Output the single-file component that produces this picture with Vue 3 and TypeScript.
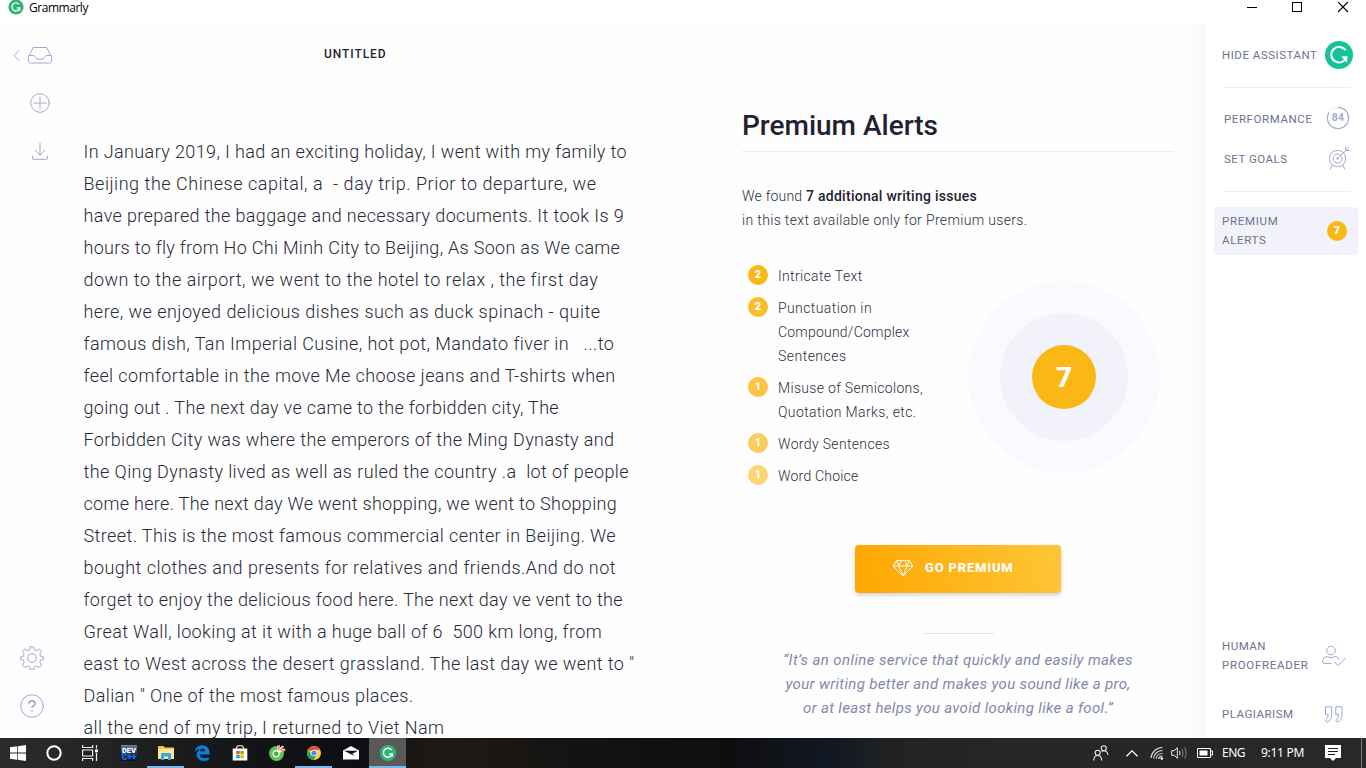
<script setup lang="ts">
import type { Directive } from 'vue'

type Line = [text: string, width: number]

// Tracks a line of text out (or in) until it spans the given width.
const vSpan: Directive<HTMLElement, number> = {
  mounted(el, binding) {
    el.style.letterSpacing = '0px'
    const natural = el.getBoundingClientRect().width
    const count = (el.textContent ?? '').length
    el.style.letterSpacing = `${(binding.value - natural) / count}px`
  },
}

const essay: Line[] = [
  ['In January 2019, I had an exciting holiday, I went with my family to', 543.5],
  ['Beijing the Chinese capital, a  - day trip. Prior to departure, we', 513],
  ['have prepared the baggage and necessary documents. It took Is 9', 540.5],
  ['hours to fly from Ho Chi Minh City to Beijing, As Soon as We came', 536.5],
  ['down to the airport, we went to the hotel to relax , the first day', 514.5],
  ['here, we enjoyed delicious dishes such as duck spinach - quite', 517],
  ['famous dish, Tan Imperial Cusine, hot pot, Mandato fiver in   ...to', 530.5],
  ['feel comfortable in the move Me choose jeans and T-shirts when', 532],
  ['going out . The next day ve came to the forbidden city, The', 475.5],
  ['Forbidden City was where the emperors of the Ming Dynasty and', 531],
  ['the Qing Dynasty lived as well as ruled the country .a  lot of people', 545.5],
  ['come here. The next day We went shopping, we went to Shopping', 533.5],
  ['Street. This is the most famous commercial center in Beijing. We', 532.5],
  ['bought clothes and presents for relatives and friends.And do not', 532.5],
  ['forget to enjoy the delicious food here. The next day ve vent to the', 539.5],
  ['Great Wall, looking at it with a huge ball of 6  500 km long, from', 518.5],
  ['east to West across the desert grassland. The last day we went to "', 551],
  ['Dalian " One of the most famous places.', 330],
  ['all the end of my trip, I returned to Viet Nam', 361],
]

interface Issue { count: number; color: string; lines: Line[] }
const issues: Issue[] = [
  { count: 2, color: '#fbb713', lines: [['Intricate Text', 84.5]] },
  { count: 2, color: '#fbbd2a', lines: [['Punctuation in', 94], ['Compound/Complex', 131.5], ['Sentences', 68.5]] },
  { count: 1, color: '#fcc442', lines: [['Misuse of Semicolons,', 145], ['Quotation Marks, etc.', 138.5]] },
  { count: 1, color: '#fccd5c', lines: [['Wordy Sentences', 112]] },
  { count: 1, color: '#fdd575', lines: [['Word Choice', 80.5]] },
]

const quote: Line[] = [
  ['“It’s an online service that quickly and easily makes', 350],
  ['your writing better and makes you sound like a pro,', 345],
  ['or at least helps you avoid looking like a fool.”', 310],
]
</script>

<template>
  <div class="window">
    <header class="titlebar">
      <svg class="app-logo" viewBox="0 0 16 16" width="16" height="16">
        <circle cx="8" cy="7" r="7.600" fill="#2fb573" />
        <path d="M11 4.400A4 4 0 1 0 11.800 8H8.800M11.800 8v2.800" fill="none" stroke="#e9fff4" stroke-width="1.300" />
      </svg>
      <span v-span="59" class="app-name">Grammarly</span>
      <svg class="controls" width="120" height="16" viewBox="0 0 120 16" fill="none" stroke="#000" shape-rendering="crispEdges">
        <path d="M1 7.500h10" />
        <rect x="46.500" y="2.500" width="9" height="9" />
        <path d="M92 2l10 10M102 2L92 12" shape-rendering="auto" stroke-width="1.100" />
      </svg>
    </header>

    <main class="content">
      <nav class="rail">
        <svg class="r-inbox" width="42" height="20" viewBox="0 0 42 20">
          <path d="M7 5.500L2 10.500l5 5" />
          <path d="M21.500 2.500h13l4.200 7.800q.8.4.8 1.500v4.200q0 2-2 2h-19q-2 0-2-2v-4.200q0-1.100.8-1.500zM16.800 10.500h4.400q1 0 1.600 1.100 1.800 2.900 5.200 2.900t5.200-2.900q.6-1.100 1.600-1.100h4.400" />
        </svg>
        <svg class="r-add" width="20" height="20" viewBox="0 0 20 20">
          <circle cx="10" cy="10" r="9.300" /><path d="M10 4v12M4 10h12" />
        </svg>
        <svg class="r-down" width="18" height="20" viewBox="0 0 18 20">
          <path d="M9 1v12M4.300 8.500L9 13l4.700-4.500M1.500 14v2.500q0 .8.800.8h13.400q.8 0 .8-.8V14" />
        </svg>
        <span class="grow"></span>
        <svg class="r-gear" width="24" height="24" viewBox="0 0 24 24">
          <circle cx="12" cy="12" r="4.400" />
          <path d="M10.300.7h3.400l.6 3.100 2.300 1 2.700-1.800 2.300 2.300-1.800 2.700 1 2.400 2.600.5v2.700l-2.600.5-1 2.500 1.800 2.600-2.400 2.400-2.700-1.800-2.300 1-.5 3h-3.400l-.6-3-2.300-1-2.700 1.800-2.300-2.400 1.800-2.600-1-2.500-2.600-.5v-2.700l2.600-.5 1-2.400-1.800-2.700 2.400-2.300 2.600 1.800 2.300-1z" />
        </svg>
        <svg class="r-help" width="24" height="24" viewBox="0 0 24 24">
          <circle cx="12" cy="12" r="11.300" />
          <path d="M9 9.700q.1-2.900 3-2.900t3 2.600q0 1.500-1.500 2.300-1.500.9-1.500 2.400M12 16.300v1.200" stroke-width="1.700" stroke-linecap="butt" />
        </svg>
      </nav>

      <section class="editor">
        <h1 class="doc-title"><span v-span="62.500">UNTITLED</span></h1>
        <div class="essay">
          <div v-for="[text, width] in essay" :key="text"><span v-span="width">{{ text }}</span></div>
        </div>
      </section>

      <section class="alerts">
        <h2><span v-span="196">Premium Alerts</span></h2>
        <p class="intro">
          <span v-span="64">We found </span><b v-span="171">7 additional writing issues</b><br />
          <span v-span="285.500">in this text available only for Premium users.</span>
        </p>
        <div class="breakdown">
          <ul>
            <li v-for="issue in issues" :key="issue.lines[0][0]">
              <i class="count" :style="{ background: issue.color }">{{ issue.count }}</i>
              <div>
                <div v-for="[text, width] in issue.lines" :key="text"><span v-span="width">{{ text }}</span></div>
              </div>
            </li>
          </ul>
          <div class="ring outer"><div class="ring middle"><div class="ring inner">7</div></div></div>
        </div>
        <button class="premium">
          <svg width="22" height="18" viewBox="0 0 22 18" fill="none" stroke="#fff" stroke-linejoin="round">
            <path d="M4.800 1.500h12.400L21 7 11 17 1 7zM1 7h20M4.800 1.500l2 5.500L11 17l4.200-10 2-5.500M6.800 7L9 1.500M15.200 7L13 1.500" />
          </svg>
          <span v-span="88.500">GO PREMIUM</span>
        </button>
        <hr />
        <blockquote>
          <div v-for="[text, width] in quote" :key="text"><span v-span="width">{{ text }}</span></div>
        </blockquote>
      </section>

      <aside class="assistant">
        <div class="row hide">
          <span v-span="95.500">HIDE ASSISTANT</span>
          <svg width="28" height="28" viewBox="0 0 28 28">
            <circle cx="14" cy="14" r="14" fill="#15c39a" />
            <path d="M20.600 9.300a7.800 7.800 0 1 0 .8 7.200h-3.800" fill="none" stroke="#fff" stroke-width="2" />
            <path d="M16.300 15.500h5.900v6.300z" fill="#fff" />
          </svg>
        </div>
        <div class="rule"></div>
        <div class="row performance">
          <span v-span="88.500">PERFORMANCE</span>
          <svg width="24" height="24" viewBox="0 0 24 24" fill="none">
            <circle cx="12" cy="12" r="10.600" stroke="#e4e6f2" />
            <path d="M12 1.400A10.600 10.600 0 1 1 3 6.400" stroke="#a6add0" stroke-width="1.200" />
            <text x="12" y="15.200" text-anchor="middle" font-size="10.500" font-weight="700" fill="#a3aacd" letter-spacing=".3">84</text>
          </svg>
        </div>
        <div class="row goals">
          <span v-span="63.500">SET GOALS</span>
          <svg width="22" height="24" viewBox="0 0 22 24" fill="none" stroke="#a0a8ce">
            <circle cx="9.500" cy="12.500" r="8.200" /><circle cx="9.500" cy="12.500" r="4.500" />
            <path d="M9.500 12.500L21 1.500M17.700 4.500V.8M17.700 4.500h3.800M4.200 19l-2 4.500M14.800 19l2 4.500" />
            <circle cx="9.500" cy="12.500" r=".8" />
          </svg>
        </div>
        <div class="rule second"></div>
        <div class="selected">
          <div><span v-span="56.500">PREMIUM</span><br /><span v-span="44.500">ALERTS</span></div>
          <i class="count">7</i>
        </div>
        <span class="grow"></span>
        <div class="row human">
          <div><span v-span="44">HUMAN</span><br /><span v-span="86.500">PROOFREADER</span></div>
          <svg width="24" height="22" viewBox="0 0 24 22" fill="none" stroke="#a0a8ce">
            <circle cx="9" cy="5.500" r="4.300" />
            <path d="M4.500 11.500q4.500 2.600 9 0 2.300.6 3.300 3.200M4.500 11.500Q.8 12.500.6 16v1.200q0 1.200 1.400 1.200h7.500M12 16.500l4 4L23.500 13" />
          </svg>
        </div>
        <div class="row plagiarism">
          <span v-span="71.500">PLAGIARISM</span>
          <svg width="20" height="17" viewBox="0 0 20 17" fill="none" stroke="#a0a8ce">
            <path d="M1.500.8h6.200v8.200q0 5.200-4.500 7.200L1.400 14q2.900-1.600 2.900-5.400H1.500zM11.800.8H18v8.200q0 5.200-4.500 7.200L11.700 14q2.900-1.600 2.900-5.400h-2.800z" />
          </svg>
        </div>
      </aside>
    </main>

    <footer class="taskbar">
      <div class="task system"><svg width="16" height="16" viewBox="0 0 16 16" fill="#fff"><path d="M0 2.300l7-1v6.300H0zM7.700 1.200L16 0v7.600H7.700zM0 8.400h7v6.300l-7-1zM7.700 8.400H16V16l-8.300-1.200z" /></svg></div>
      <div class="task system"><svg width="16" height="16" viewBox="0 0 16 16"><circle cx="8" cy="8" r="6.700" fill="none" stroke="#fff" stroke-width="2" /></svg></div>
      <div class="task system">
        <svg width="16" height="16" viewBox="0 0 16 16" fill="none" stroke="#eee" stroke-width="1.200"><path d="M.6 0v2.500h10V0M.6 16v-2.500h10V16M.6 5h10v6H.6zM14.500 0v3.500M14.500 8v8" /><path d="M13 4.500h3v2.800h-3z" fill="#fff" stroke="none" /></svg>
      </div>
      <div class="task dev">
        <svg width="16" height="16" viewBox="0 0 16 16">
          <defs><linearGradient id="devbg" x2="0" y2="1"><stop stop-color="#6c7ea5" /><stop offset=".45" stop-color="#273b6b" /><stop offset="1" stop-color="#07112c" /></linearGradient></defs>
          <rect width="16" height="16" fill="url(#devbg)" />
          <text x="8" y="7.500" text-anchor="middle" font-size="7.500" font-weight="900" fill="#fff">DEV</text>
          <text x="8" y="15" text-anchor="middle" font-size="8.500" font-weight="900" fill="#1377e8">C++</text>
        </svg>
      </div>
      <div class="task open">
        <svg width="18" height="16" viewBox="0 0 18 16"><path d="M1 1.500Q1 1 1.500 1h5l1.500 1.500h8.500q.5 0 .5.500v11H1z" fill="#f4c542" /><path d="M1 4h16v10H1z" fill="#ffe694" /><path d="M4 15V9.300Q4 8 5.300 8h7.400Q14 8 14 9.300V15h-3v-3.500H7V15z" fill="#36a9e1" /></svg>
      </div>
      <div class="task edge">
        <svg width="16" height="16" viewBox="0 0 16 16"><path d="M.5 7.300C1.200 2.500 4.300.3 8.200.3c4.800 0 7.300 3.500 7.300 7.300v1.800H5.700c.2 2.600 2.300 3.700 4.700 3.700 1.700 0 3.200-.5 4.300-1.200v3c-1.400.7-3 1-4.800 1-4.300 0-7.200-2.300-7.200-6.300 0-2.400 1.200-4.300 3.200-5.400C3.200 4.500 1.500 5.600.5 7.300zm5.300-1H11c0-1.800-.9-2.700-2.500-2.700-1.400 0-2.400.9-2.700 2.700z" fill="#0b7edb" /></svg>
      </div>
      <div class="task">
        <svg width="16" height="16" viewBox="0 0 16 16"><path d="M4.500 4V2.500Q5 .7 8 .7t3.500 1.800V4" fill="none" stroke="#ddd" stroke-width="1.200" /><path d="M.7 3.500h14.600v12H.7z" fill="#fff" /><path d="M4.300 6h3.400v3.300H4.300z" fill="#f25022" /><path d="M8.400 6h3.400v3.300H8.400z" fill="#7fba00" /><path d="M4.300 10h3.400v3.300H4.300z" fill="#00a4ef" /><path d="M8.400 10h3.400v3.300H8.400z" fill="#ffb900" /></svg>
      </div>
      <div class="task">
        <svg width="18" height="16" viewBox="0 0 18 16"><circle cx="8.500" cy="8.500" r="7.500" fill="#64c355" /><circle cx="8.200" cy="8.800" r="3" fill="#4ba944" stroke="#e5f7df" stroke-width="1.400" /><path d="M9 6.500L9.700.3l2.300.3-.3 3L14 .6l2 1.400-2.200 2.700 3.200-1.200.4 2.300-6 2z" fill="#fff" /><path d="M10.700 5.500l.2-4.500M12.500 5.800L14.900 2M13.300 6.500l3.500-1.500" stroke="#ec6731" stroke-width="1.200" /></svg>
      </div>
      <div class="task open">
        <svg width="14" height="14" viewBox="0 0 14 14"><circle cx="7" cy="7" r="7" fill="#ffcd40" /><path d="M7 7L1 3.500A7 7 0 0 1 13.100 3.800H7z" fill="#e5493a" /><path d="M1 3.500A7 7 0 0 0 6.500 14L9.700 8.600 4.200 8.600z" fill="#27a35a" /><circle cx="7" cy="7" r="3.300" fill="#fff" /><circle cx="7" cy="7" r="2.600" fill="#4b8bf4" /></svg>
      </div>
      <div class="task">
        <svg width="16" height="14" viewBox="0 0 16 14"><path d="M0 4.500L8 0l8 4.500V13.500H0z" fill="#fff" /><path d="M1 4.800h14L9.200 7.800l2.800 2.500z" fill="#111" /></svg>
      </div>
      <div class="task open current">
        <svg width="16" height="16" viewBox="0 0 16 16"><circle cx="8" cy="8" r="8" fill="#2fb573" /><path d="M11.500 5A4.500 4.500 0 1 0 12.200 9H9.200M12.200 8.500v3" fill="none" stroke="#fff" stroke-width="1.400" /></svg>
      </div>
      <span class="grow"></span>
      <div class="tray">
        <svg class="t-people" width="16" height="16" viewBox="0 0 16 16" fill="none" stroke="#eee" stroke-width="1.100"><circle cx="4.700" cy="7.800" r="2.500" /><path d="M.7 15.500q.3-5 4-5t4 5" /><circle cx="10.800" cy="3.200" r="2.500" /><path d="M8.500 6.500q1-.7 2.300-.7 3.600 0 4.100 4.200" /></svg>
        <svg class="t-up" width="12" height="7" viewBox="0 0 12 7" fill="none" stroke="#fff" stroke-width="1.200"><path d="M.5 6.300L6 .9l5.500 5.400" /></svg>
        <svg class="t-wifi" width="14" height="14" viewBox="0 0 14 14" fill="none" stroke="#ddd" stroke-width="1.100"><path d="M1 12A11.500 11.500 0 0 1 12.500 1.500M3.500 12.500A9 9 0 0 1 12.500 4.500M6 13A6.500 6.500 0 0 1 12.500 7.500M8.500 13A4 4 0 0 1 12.500 10" /><circle cx="11.800" cy="12.500" r="1.300" fill="#fff" stroke="none" /></svg>
        <svg class="t-sound" width="17" height="14" viewBox="0 0 17 14" fill="none" stroke="#eee"><path d="M.7 4.700h2.600l3-3v10.600l-3-3H.7zM8.500 4.800q1.200 2.200 0 4.400" /><path d="M11 3q2.200 4 0 8M13.500 1.300q3.300 5.700 0 11.400" stroke="#888" /></svg>
        <svg class="t-battery" width="16" height="10" viewBox="0 0 16 10"><path d="M.5.5h13v9H.5zM14 3h1.500v4H14" fill="none" stroke="#fff" /><path d="M2.500 2.500h8v5h-8z" fill="#fff" /></svg>
        <span class="t-lang"><span v-span="23">ENG</span></span>
        <span class="t-time"><span v-span="43">9:11 PM</span></span>
        <svg class="t-note" width="16" height="16" viewBox="0 0 16 16"><path d="M0 0h16v13h-5l-3 3-3-3H0z" fill="#fff" /><path d="M3 3.500h10M3 6.500h10M3 9.500h7" stroke="#222" /></svg>
        <i class="t-edge"></i>
      </div>
    </footer>
  </div>
</template>

<style>
body { margin: 0; overflow: hidden; }
</style>

<style scoped>
* { box-sizing: border-box; }
.window { width: 1366px; height: 768px; display: grid; grid-template-rows: 24px 714px 30px; overflow: hidden; background: #fff; font-family: Roboto, "Liberation Sans", sans-serif; color: #2b2e3c; }
span, b { white-space: pre; display: inline-block; }
svg { flex: none; display: block; }
.grow { flex: 1; }
.titlebar { display: flex; padding-left: 8px; align-items: flex-start; }
.app-name { font: 12px/16px "Open Sans", sans-serif; color: #000; margin-left: 5px; }
.controls { margin-left: auto; }
.content { display: grid; grid-template-columns: 84px 658px 464px 160px; background: #fefefe; overflow: hidden; }

.rail { display: flex; flex-direction: column; padding: 21px 0 20px 11px; height: 714px; }
.rail svg { fill: none; stroke: #a0a8cf; stroke-linecap: round; stroke-linejoin: round; }
.r-inbox { margin-left: 1px; }
.r-add { margin: 28px 0 0 19px; }
.r-down { margin: 29px 0 0 20px; }
.r-gear, .r-help { margin-left: 9px; }
.rail .r-help { margin-top: 24px; }

.doc-title { margin: 0; padding: 20px 0 0 240px; font-size: 12px; line-height: 20px; font-weight: 500; color: #1f2230; }
.essay { margin: 72px 0 0 -.5px; font-size: 18px; line-height: 32px; font-weight: 350; color: #272a38; }
.essay > div { height: 32px; }
.editor { height: 714px; overflow: hidden; }

.alerts { padding-top: 82px; background: linear-gradient(to right, #fefefe 436px, #fafafa); }
h2 { margin: 0; width: 432px; height: 46px; font-size: 28px; line-height: 39px; font-weight: 500; color: #1f2230; border-bottom: 1px solid #ececf1; }
.intro { margin: 32px 0 0; font-size: 14px; line-height: 24px; font-weight: 350; color: #2c2f3d; height: 48px; }
.intro b { font-weight: 500; color: #1f2230; }
.breakdown { display: flex; margin-top: 32px; height: 232px; }
ul { list-style: none; margin: 0; padding: 0 0 0 6px; width: 226px; font-size: 14px; line-height: 24px; font-weight: 350; color: #2c2f3d; }
li { display: flex; gap: 10px; margin-bottom: 8px; }
.count { width: 20px; height: 20px; border-radius: 50%; background: #fbb713; color: #fff; font-style: normal; font-size: 11px; line-height: 20px; font-weight: 900; text-align: center; flex: none; margin-top: 1px; }
.ring { border-radius: 50%; display: flex; align-items: center; justify-content: center; }
.outer { width: 192px; height: 192px; margin-top: 17px; background: #f9faff; }
.middle { width: 128px; height: 128px; background: #f1f2fa; }
.inner { width: 64px; height: 64px; background: #fbb713; color: #fff; font-size: 28px; font-weight: 800; }
.premium { display: flex; align-items: center; border: 0; width: 206px; height: 48px; margin: 49px 0 0 113px; padding: 0 0 2px 37px; border-radius: 4px; background: linear-gradient(72deg, #ffa600, #fdc638); box-shadow: 0 2px 4px rgba(90, 100, 150, .3); color: #fff; font: 800 13px/20px Roboto, sans-serif; gap: 11px; }
hr { width: 72px; height: 1px; border: 0; background: #e4e5f0; margin: 40px 0 0 180px; }
blockquote { margin: 14px 0 0; width: 432px; text-align: center; font-size: 15px; line-height: 24px; font-style: italic; font-weight: 450; color: #8288ad; }

.assistant { background: #fff; display: flex; flex-direction: column; height: 714px; font-size: 11.500px; line-height: 19px; color: #6d7290; }
.row { display: flex; align-items: center; justify-content: space-between; padding: 0 17px 0 16px; flex: none; }
.hide { height: 28px; margin-top: 17px; padding-right: 13px; }
.rule { height: 1px; flex: none; margin: 18px 15px 0 18px; background: #ececf4; }
.performance { height: 24px; margin-top: 18px; padding-left: 18px; padding-right: 16px; }
.performance > span { padding-top: 2px; }
.goals { height: 24px; margin-top: 16px; padding-left: 18px; padding-right: 16px; }
.goals > span { padding-top: 2px; }
.rule.second { margin-top: 21px; }
.selected { display: flex; justify-content: space-between; margin: 15px 8px 0; height: 48px; padding: 5px 11px 0 8px; background: #f1f2fb; border-radius: 4px; }
.selected .count { margin-top: 9px; }
.human { height: 38px; padding-right: 20px; }
.plagiarism { height: 20px; margin: 29px 0 14px; padding-right: 22px; }

.taskbar { display: flex; background: linear-gradient(to right, #2b2b29 0, #232323 110px, #111317 260px, #0c0e12 360px, #201a17 440px, #191613 510px, #121212 600px, #0e0e0f 730px, #111824 830px, #202223 890px, #262626 1000px, #282828); color: #fff; }
.task { width: 37px; height: 30px; display: flex; align-items: center; justify-content: center; flex: none; }
.task.system { width: 36px; }
.dev { margin-left: 2px; }
.edge { padding-right: 1px; }
.open { box-shadow: inset 0 -2px #76b9ed; }
.current { background: #5a5959; }
.tray { display: flex; align-items: center; font: 12px/30px "Noto Sans", sans-serif; }
.t-up { margin-left: 17px; }
.t-wifi { margin-left: 12px; }
.t-sound { margin-left: 7px; }
.t-battery { margin-left: 9px; }
.t-lang { margin-left: 9px; width: 39px; }
.t-time { width: 64px; }
.t-edge { width: 1px; height: 30px; background: #777; margin: 0 4px 0 20px; }
</style>
